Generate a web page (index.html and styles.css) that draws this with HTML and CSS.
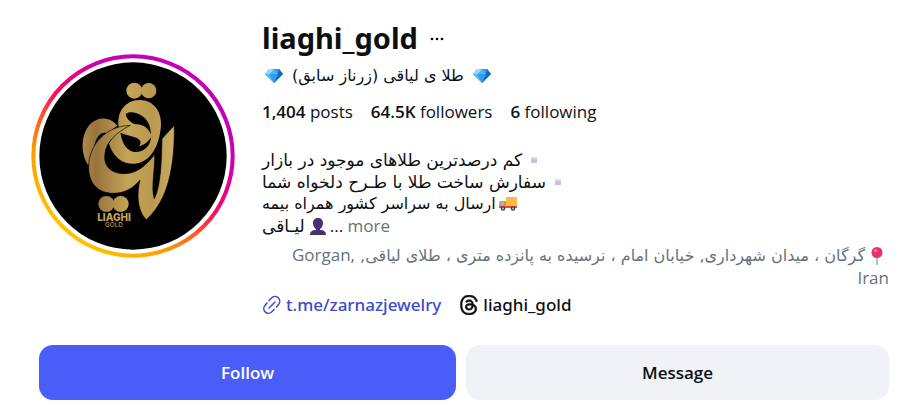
FILE: index.html
```html
<!DOCTYPE html>
<html lang="en">
<head>
<meta charset="utf-8">
<meta name="viewport" content="width=device-width, initial-scale=1">
<title>liaghi_gold</title>
<link rel="stylesheet" href="styles.css">
</head>
<body>
<svg class="defs" aria-hidden="true">
  <symbol id="gem" viewBox="0 0 18 14">
    <path fill="#2a8be0" d="M4 0h10l4 5-9 9-9-9z"/>
    <path fill="#8ddcfa" d="M4 0 0 5h5zM4 0h5L5 5z"/>
    <path fill="#4db8f2" d="M9 0 5 5h8zM0 5h5l4 9z"/>
    <path fill="#2f9df0" d="M9 0h5l-1 5zM5 5h8l-4 9z"/>
    <path fill="#1767c4" d="m14 0 4 5h-5zM13 5h5l-9 9z"/>
  </symbol>
  <symbol id="square" viewBox="0 0 6 6">
    <path fill="#cdbfe4" d="M0 0h6v6H0z"/><path fill="#e2d8f0" d="M0 0h6v2H0z"/>
  </symbol>
</svg>
<main class="profile">
  <header class="top">
    <svg class="avatar" viewBox="34 27 612 612" role="img" aria-label="Liaghi Gold">
      <defs>
        <linearGradient id="ring" x1="0.2" y1="0.9" x2="0.8" y2="0.1">
          <stop offset="0" stop-color="#fcc400"/><stop offset=".22" stop-color="#fc9c00"/>
          <stop offset=".38" stop-color="#fa5a2a"/><stop offset=".52" stop-color="#f80a62"/>
          <stop offset=".7" stop-color="#dc009c"/><stop offset=".85" stop-color="#c400b8"/>
        </linearGradient>
        <linearGradient id="gold" gradientUnits="userSpaceOnUse" x1="188" y1="0" x2="466" y2="0">
          <stop offset="0" stop-color="#ab8a49"/><stop offset=".15" stop-color="#98743d"/>
          <stop offset=".5" stop-color="#c5a557"/><stop offset=".75" stop-color="#ba984f"/><stop offset="1" stop-color="#c9ad63"/>
        </linearGradient>
      </defs>
      <circle cx="340" cy="333" r="299" fill="#fff" stroke="url(#ring)" stroke-width="12"/>
      <circle cx="340" cy="333" r="281"/>
      <g fill="url(#gold)">
        <circle cx="344" cy="137" r="24"/><circle cx="387" cy="137" r="23"/>
        <circle cx="260" cy="477" r="24"/><circle cx="303" cy="477" r="24"/>
        <path d="M206 361C184 330 182 275 207 243c22-29 62-31 86-1L262 264C240 258 228 280 222 310z"/>
        <path fill-rule="evenodd" d="M297 245C290 200 318 165 360 165c42 0 66 35 64 75-4 60-29 112-79 116-35 1-63-16-77-60zM318 207c17-15 57 3 67 25 7 13 9 26 8 36-8-23-28-30-43-30-15-2-30-16-32-31zM302 263c28 12 48 9 60 25 2 8-2 14-4 16 14-4 27-12 36-27-2 28-22 44-46 44-23-1-40-21-46-58z"/>
        <path stroke="#000" stroke-width="2" d="M332 241C262 243 206 295 207 370c1 50 33 75 73 75 35 0 60-15 81-40-9 35-11 90 19 119 50-44 86-124 84-283l-37 40c-2 69-3 139-23 180-11-31 3-91 1-133-25 34-55 58-90 58-40 0-65-21-59-61 4-35 34-63 76-84z"/>
      </g>
      <text class="logo-name" x="283" y="527" text-anchor="middle">LIAGHI</text>
      <text class="logo-sub" x="283" y="547" text-anchor="middle">GOLD</text>
    </svg>
    <div class="info">
      <div class="name-row">
        <h1>liaghi_gold</h1>
        <button class="dots" type="button" aria-label="Options"><svg viewBox="0 0 14 4"><circle cx="2" cy="2" r="1.3"/><circle cx="7" cy="2" r="1.3"/><circle cx="12" cy="2" r="1.3"/></svg></button>
      </div>
      <p class="full-name fa" dir="rtl"><svg class="gem"><use href="#gem"/></svg><span>طلا ی لیاقی (زرناز سابق)</span><svg class="gem"><use href="#gem"/></svg></p>
      <ul class="stats">
        <li><b>1,404</b> posts</li>
        <li><b>64.5K</b> followers</li>
        <li><b>6</b> following</li>
      </ul>
      <div class="bio">
        <p class="fa offer" dir="rtl"><svg class="square"><use href="#square"/></svg>کم درصدترین طلاهای موجود در بازار</p>
        <p class="fa offer" dir="rtl"><svg class="square"><use href="#square"/></svg>سفارش ساخت طلا با طـرح دلخواه شما</p>
        <p class="fa" dir="rtl"><svg class="truck" viewBox="0 0 18 14"><path fill="#f9bd45" d="M7 0h11v11H7z"/><path fill="#f08a2c" d="M1 4h6v7H0V7z"/><path fill="#7cc4ec" d="M2 5h3v3H1z"/><path fill="#e6483d" d="M0 9h18v2H0z"/><circle cx="4" cy="11.5" r="2.3" fill="#4b3a56"/><circle cx="14" cy="11.5" r="2.3" fill="#4b3a56"/><circle cx="4" cy="11.5" r="1" fill="#c9bfd0"/><circle cx="14" cy="11.5" r="1" fill="#c9bfd0"/></svg>ارسال به سراسر کشور همراه بیمه</p>
        <p><span class="fa offer">لیـاقی</span><svg class="person" viewBox="0 0 16 17"><path fill="#4a2f72" d="M8 0c3 0 5 2 5 5 0 2-1 5-3 6v1c3 0 6 1 6 5H0c0-4 3-5 6-5v-1C4 10 3 7 3 5c0-3 2-5 5-5z"/></svg>... <a class="more" href="#">more</a></p>
      </div>
      <p class="address fa" dir="rtl"><svg class="pin" viewBox="0 0 12 18"><path stroke="#9aa5b1" stroke-width="1.4" d="M6 9v9"/><circle cx="6" cy="5.5" r="5.5" fill="#e8306c"/><circle cx="4.5" cy="3.5" r="1.6" fill="#f87ba2"/></svg>گرگان ، میدان شهرداری, خیابان امام ، نرسیده به پانزده متری ، طلای لیاقی, <bdi class="latin" dir="ltr">Gorgan,</bdi><br><span class="latin">Iran</span></p>
      <nav class="links">
        <a class="site" href="#"><svg viewBox="0 0 20 20" fill="none" stroke="currentColor" stroke-width="1.5" stroke-linecap="round"><path d="M7 5.500 9.500 3a4.600 4.600 0 0 1 7 6.500L14.500 12"/><path d="m7 13 6-6"/><path d="m5 8-2 2.500a4.600 4.600 0 0 0 6.500 6.500l2.500-2.500"/></svg>t.me/zarnazjewelry</a>
        <a class="threads" href="#"><svg viewBox="0 0 192 192" fill="currentColor" stroke="currentColor" stroke-width="5"><path d="M141.537 88.988a66.667 66.667 0 0 0-2.518-1.143c-1.482-27.307-16.403-42.940-41.457-43.100h-.340c-14.986 0-27.449 6.396-35.120 18.036l13.779 9.452c5.730-8.695 14.724-10.548 21.348-10.548h.229c8.249.053 14.474 2.452 18.503 7.129 2.932 3.405 4.893 8.111 5.864 14.050-7.314-1.243-15.224-1.626-23.680-1.140-23.820 1.371-39.134 15.264-38.105 34.568.522 9.792 5.400 18.216 13.735 23.719 7.047 4.652 16.124 6.927 25.557 6.412 12.458-.683 22.231-5.436 29.049-14.127 5.178-6.600 8.453-15.153 9.899-25.930 5.937 3.583 10.337 8.298 12.767 13.966 4.132 9.635 4.373 25.468-8.546 38.376-11.319 11.308-24.925 16.200-45.488 16.351-22.809-.169-40.060-7.484-51.275-21.742C35.236 139.966 29.808 120.682 29.605 96c.203-24.682 5.630-43.966 16.133-57.317C56.954 24.425 74.204 17.110 97.013 16.940c22.975.171 40.526 7.521 52.171 21.847 5.710 7.026 10.015 15.860 12.853 26.162l16.147-4.308c-3.440-12.680-8.853-23.606-16.219-32.668C147.036 9.607 125.202.195 97.070 0h-.113C68.882.194 47.292 9.642 32.788 28.080 19.882 44.485 13.224 67.315 13.001 95.932L13 96v.067c.224 28.617 6.882 51.447 19.788 67.854C47.292 182.358 68.882 191.806 96.957 192h.113c24.960-.173 42.554-6.708 57.048-21.189 18.963-18.945 18.392-42.692 12.142-57.270-4.484-10.454-13.033-18.945-24.723-24.553ZM98.440 129.507c-10.440.588-21.286-4.098-21.820-14.135-.397-7.442 5.296-15.746 22.461-16.735 1.966-.114 3.895-.169 5.790-.169 6.235 0 12.068.606 17.371 1.765-1.978 24.702-13.580 28.713-23.802 29.274Z"/></svg>liaghi_gold</a>
      </nav>
    </div>
  </header>
  <div class="actions">
    <button class="follow" type="button">Follow</button>
    <button class="message" type="button">Message</button>
  </div>
</main>
</body>
</html>
```
FILE: styles.css
```css
* { box-sizing: border-box; }
body {
  margin: 0;
  background: #fff;
  color: #0c1014;
  font: 17px/22px "Open Sans", "DejaVu Sans", sans-serif;
}
h1, p, ul { margin: 0; padding: 0; }
a { color: inherit; text-decoration: none; }
button { border: 0; font: inherit; color: inherit; cursor: pointer; }
.defs { position: absolute; width: 0; height: 0; }
.profile { padding: 16px 35px 7px 31px; }
.top { display: flex; gap: 27px; }
.avatar { flex: none; width: 204px; height: 204px; margin-top: 38px; }
.logo-name { font: 800 30px Inter, sans-serif; fill: #c5a557; }
.logo-sub { font: 500 19px Inter, sans-serif; fill: #b89750; }
.info { flex: 1; min-width: 0; }
.name-row { display: flex; align-items: center; gap: 12px; height: 44px; }
h1 { font-family: "Noto Sans", sans-serif; font-size: 29px; line-height: 44px; font-weight: 700; }
.dots { padding: 0; background: none; line-height: 0; }
.dots svg { width: 14px; height: 4px; }
.fa { font-family: "DejaVu Sans", sans-serif; font-size: 16px; }
.full-name { display: flex; justify-content: flex-end; align-items: center; gap: 9px; height: 32px; padding-left: 3px; }
.gem { width: 18px; height: 14px; }
.stats { display: flex; gap: 18px; list-style: none; padding: 9px 0 26px; }
.stats b { font-weight: 600; }
.bio p { text-align: left; height: 22px; white-space: nowrap; }
.bio .offer { font-size: 17px; }
.square { width: 6px; height: 6px; margin: 0 4px 3px 9px; }
.truck { width: 18px; height: 14px; margin-left: 3px; vertical-align: -2px; }
.person { width: 16px; height: 17px; margin: 0 4px 0 5px; vertical-align: -3px; }
.more, .address { color: #6a717a; }
.address { margin-top: 7px; white-space: nowrap; }
.pin { width: 12px; height: 18px; margin: 0 6px 0 6px; vertical-align: -4px; }
.latin { font-family: "Open Sans", sans-serif; font-size: 17px; }
.links { display: flex; gap: 18px; margin-top: 4px; font-family: "Noto Sans", sans-serif; font-weight: 500; }
.links a { display: flex; align-items: center; gap: 4px; }
.links svg { width: 20px; height: 20px; }
.site { color: #3c4ad0; }
.actions { display: flex; gap: 10px; margin-top: 29px; padding-left: 8px; }
.actions button { flex: 70 1 0; height: 55px; border-radius: 14px; font-weight: 600; }
.actions .follow { background: #4a5df9; color: #fff; }
.actions .message { flex-grow: 71; background: #f0f2f5; }
```
